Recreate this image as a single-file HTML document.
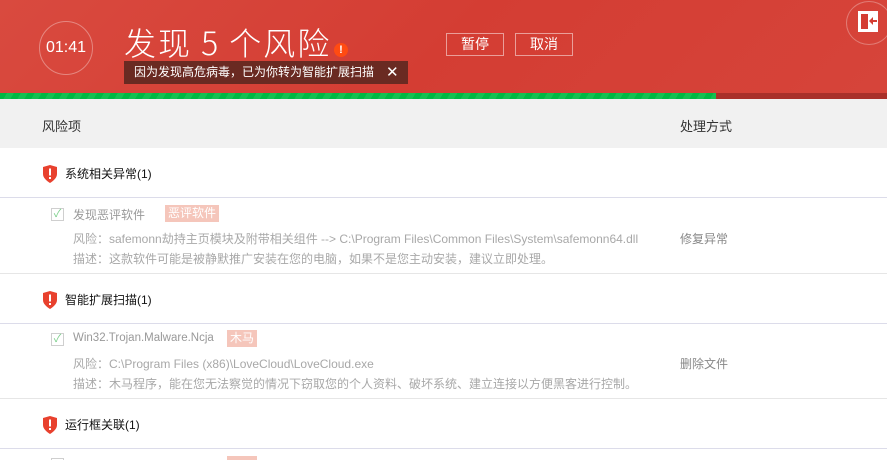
<!DOCTYPE html><html><head><meta charset="utf-8"><style>
*{margin:0;padding:0;box-sizing:border-box}
html,body{width:887px;height:460px;overflow:hidden}
body{background:#fff;font-family:"Liberation Sans","Noto Sans CJK SC",sans-serif;font-size:12px;position:relative}
.hd{position:absolute;left:0;top:0;width:887px;height:93px;background:linear-gradient(135deg,#d94a3f 0%,#d43d33 50%,#d6443a 100%)}
.abs{position:absolute}
.clock{left:39px;top:21px;width:54px;height:54px;border:1.5px solid rgba(255,255,255,.35);border-radius:50%;color:#fff;font-size:16px;text-align:center;line-height:51px}
.title{left:124px;top:20px;color:#fff;font-size:32px;font-family:"Noto Sans CJK SC",sans-serif;font-weight:300;letter-spacing:2px;line-height:44px;white-space:nowrap}
.warn{left:334px;top:43px;width:14px;height:14px;border-radius:50%;background:#ff4b12;color:#fff;font-size:11px;font-weight:bold;text-align:center;line-height:14px}
.tip{left:124px;top:61px;width:284px;height:23px;background:#6a2a22;color:#fff;font-size:12px;line-height:23px;padding-left:10px;white-space:nowrap}
.btn{top:33px;width:58px;height:23px;border:1px solid rgba(255,255,255,.5);color:#fff;font-size:14px;text-align:center;line-height:21px}
.bar{left:0;top:93px;width:887px;height:6px;background:#a9302a}
.bar i{position:absolute;left:0;top:0;width:716px;height:6px;background:repeating-linear-gradient(120deg,#00b844 0 6px,#14c052 6px 12px)}
.colh{left:0;top:99px;width:887px;height:49px;background:#f1f1f1;color:#333;font-size:13px;line-height:56px}
.sec{left:0;width:887px;height:50px;border-bottom:1px solid #dcdcea;font-size:12px;color:#111;line-height:52px}
.shield{position:absolute;left:42px;top:17px;width:16px;height:18px}
.item{left:0;width:887px;height:75px;border-bottom:1px solid #e6e6e6;color:#a8a8a8;white-space:nowrap}
.cb{position:absolute;left:51px;top:9px;width:13px;height:13px;border:1px solid #cfcfcf;color:#7bcf8a;font-size:11px;line-height:11px;text-align:center}
.tag{display:inline-block;background:#f5c6bb;color:#fff;padding:0 3px;font-size:12px;line-height:17px}
</style></head><body>
<div class="hd"></div>
<div class="abs clock">01:41</div>
<div class="abs title">发现 5 个风险</div>
<div class="abs warn">!</div>
<div class="abs tip">因为发现高危病毒，已为你转为智能扩展扫描<span style="position:absolute;left:262px;top:0;font-size:15px">✕</span></div>
<div class="abs btn" style="left:446px">暂停</div>
<div class="abs btn" style="left:515px">取消</div>
<div class="abs" style="left:846px;top:1px;width:46px;height:44px;border:1.5px solid rgba(255,255,255,.3);border-radius:50%"></div>
<div class="abs" style="left:858px;top:11px;width:20px;height:21px;background:#fff"><div style="position:absolute;left:3px;top:3px;width:7px;height:15px;background:#d43d33"></div><svg style="position:absolute;left:10px;top:5px" width="10" height="10"><path d="M1 5L5 1V4H9V6H5V9Z" fill="#d43d33"/></svg></div>
<div class="abs bar"><i></i></div>
<div class="abs colh"><span style="position:absolute;left:42px">风险项</span><span style="position:absolute;left:680px">处理方式</span></div>

<div class="abs sec" style="top:148px"><svg class="shield" viewBox="0 0 16 18"><path d="M1 2L8 0L15 2V9C15 13 11 16 8 18C5 16 1 13 1 9Z" fill="#e8412e"/><rect x="7" y="3.5" width="2" height="7" fill="#fff"/><rect x="7" y="12" width="2" height="2" fill="#fff"/></svg><span style="position:absolute;left:65px">系统相关异常(1)</span></div>
<div class="abs item" style="top:199px"><div class="cb">✓</div>
<div class="abs" style="left:73px;top:7px;color:#999">发现恶评软件</div><div class="abs" style="left:165px;top:6px"><span class="tag">恶评软件</span></div>
<div class="abs" style="left:73px;top:31px">风险：safemonn劫持主页模块及附带相关组件 --&gt; C:\Program Files\Common Files\System\safemonn64.dll</div>
<div class="abs" style="left:73px;top:51px">描述：这款软件可能是被静默推广安装在您的电脑，如果不是您主动安装，建议立即处理。</div>
<div class="abs" style="left:680px;top:31px;color:#888">修复异常</div></div>

<div class="abs sec" style="top:274px"><svg class="shield" viewBox="0 0 16 18"><path d="M1 2L8 0L15 2V9C15 13 11 16 8 18C5 16 1 13 1 9Z" fill="#e8412e"/><rect x="7" y="3.5" width="2" height="7" fill="#fff"/><rect x="7" y="12" width="2" height="2" fill="#fff"/></svg><span style="position:absolute;left:65px">智能扩展扫描(1)</span></div>
<div class="abs item" style="top:324px"><div class="cb">✓</div>
<div class="abs" style="left:73px;top:8px;color:#999;font-size:11.5px">Win32.Trojan.Malware.Ncja</div><div class="abs" style="left:227px;top:6px"><span class="tag">木马</span></div>
<div class="abs" style="left:73px;top:31px">风险：C:\Program Files (x86)\LoveCloud\LoveCloud.exe</div>
<div class="abs" style="left:73px;top:51px">描述：木马程序，能在您无法察觉的情况下窃取您的个人资料、破坏系统、建立连接以方便黑客进行控制。</div>
<div class="abs" style="left:680px;top:31px;color:#888">删除文件</div></div>

<div class="abs sec" style="top:399px"><svg class="shield" viewBox="0 0 16 18"><path d="M1 2L8 0L15 2V9C15 13 11 16 8 18C5 16 1 13 1 9Z" fill="#e8412e"/><rect x="7" y="3.5" width="2" height="7" fill="#fff"/><rect x="7" y="12" width="2" height="2" fill="#fff"/></svg><span style="position:absolute;left:65px">运行框关联(1)</span></div>
<div class="abs" style="left:51px;top:458px;width:13px;height:2px;border:1px solid #cfcfcf;border-bottom:0"></div>
<div class="abs" style="left:227px;top:456px;width:30px;height:4px;background:#f5c6bb"></div>
</body></html>
